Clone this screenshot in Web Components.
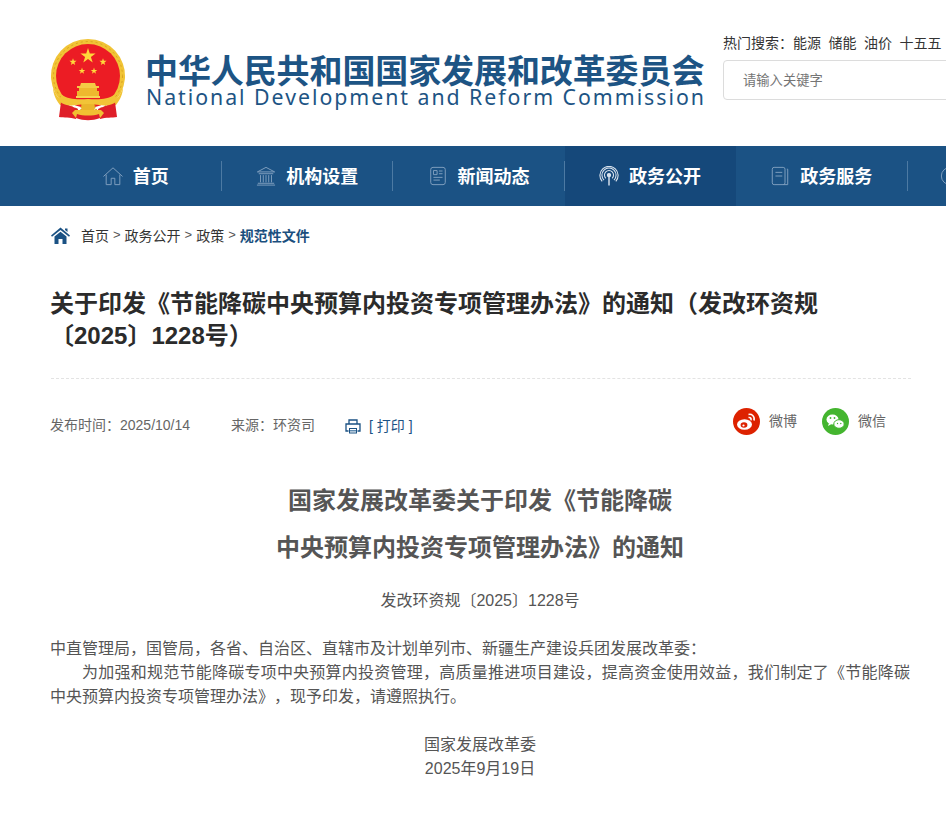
<!DOCTYPE html>
<html lang="zh"><head><meta charset="utf-8">
<style>
html,body{margin:0;padding:0;background:#fff;overflow:hidden;width:946px;height:814px;text-spacing-trim:space-all}
body{font-family:"Liberation Sans","Noto Sans CJK SC",sans-serif}
</style></head><body>
<site-header></site-header>
<main-nav>
<nav-item label="首页"><svg viewBox="0 0 22 22" fill="none" stroke="#7d9dbd" stroke-width="1.1"><path d="M.5 11.500 11 2l10.500 9.500M3.500 9.500V20.500h5.500v-7h4v7h5.500V9.500"/></svg></nav-item>
<nav-item label="机构设置"><svg viewBox="0 0 22 22" fill="none" stroke="#7d9dbd" stroke-width="1.1"><path d="M1.500 6.500 11 1.500l9.500 5zM3 8.500h16M5 10v8M8 10v8M11 10v8M14 10v8M17 10v8M2 19h18M1 21h20"/></svg></nav-item>
<nav-item label="新闻动态"><svg viewBox="0 0 22 22" fill="none" stroke="#7d9dbd" stroke-width="1.1"><rect x="3" y="1.500" width="16" height="19" rx="2.500"/><path d="M6 5h4v4.500H6zM12 5.500h4M12 8.500h4M6 12.500h10M6 15.500h7"/></svg></nav-item>
<nav-item label="政务公开" active><svg viewBox="0 0 22 22" fill="none" stroke="#d9e3ee" stroke-width="1.200"><circle cx="11" cy="10" r="1.800" fill="#d9e3ee"/><path d="M11 11v10.500" stroke-width="1.600"/><path d="M7.500 13.500a5 5 0 1 1 7 0M5.500 15.500a7.800 7.800 0 1 1 11 0M3.500 17a10 10 0 1 1 15 0"/></svg></nav-item>
<nav-item label="政务服务"><svg viewBox="0 0 22 22" fill="none" stroke="#7d9dbd" stroke-width="1.1"><rect x="2.500" y="1.500" width="14" height="19" rx="2"/><path d="M6 7h7.500M6 11h7.500M18.500 3.500h1v17h-5"/></svg></nav-item>
<nav-item label="" last><svg viewBox="0 0 22 22" fill="none" stroke="#7d9dbd" stroke-width="1.1"><circle cx="11" cy="11" r="9.500"/></svg></nav-item>
</main-nav>
<article-page>
<bread-crumb></bread-crumb>
<article-title>关于印发《节能降碳中央预算内投资专项管理办法》的通知（发改环资规〔2025〕1228号）</article-title>
<article-meta></article-meta>
<article-body></article-body>
</article-page>
<script>
function comp(name,css,html){
  customElements.define(name,class extends HTMLElement{
    constructor(){super();const s=this.attachShadow({mode:'open'});
      s.innerHTML='<style>'+css+'</style>'+(typeof html==='function'?html(this):html);}
  });
}
const star=(cx,cy,r,f='#ffd93b')=>{let p=[];for(let i=0;i<10;i++){const a=-Math.PI/2+i*Math.PI/5,q=i%2?r*.382:r;p.push((cx+q*Math.cos(a)).toFixed(1)+','+(cy+q*Math.sin(a)).toFixed(1));}return `<polygon points="${p.join(' ')}" fill="${f}"/>`};
const emblem=`<svg class="emblem" width="76" height="82" viewBox="0 0 76 82">
<path d="M15 66A37 37 0 1 1 61 66Z" fill="#f1c436"/>
<circle cx="38" cy="37" r="34.500" fill="none" stroke="#d9a320" stroke-width="1" stroke-dasharray="2 3"/>
<circle cx="38" cy="37" r="32" fill="#ec1c24"/>
${star(38,17,8)}${star(23,23,3.800)}${star(53,23,3.800)}${star(32,32,3.500)}${star(44,32,3.500)}
<path d="M31 44h14l1 3h3v2H27v-2h3z" fill="#f4cb45"/><path d="M29 49h18v3h2v5H27v-5h2z" fill="#eeb92e"/><path d="M26 57h24v2H26z" fill="#f7d552"/>
<path d="M3 48c2 7 5 11 9 14l4 5-6-1C6 61 3 55 3 48zM73 48c-2 7-5 11-9 14l-4 5 6-1C70 61 73 55 73 48z" fill="#f1c436"/>
<path d="M11 63 28 70 26 80C20 78 14 79 9 78Z" fill="#df1f29"/><path d="M65 63 48 70 50 80C56 78 62 79 67 78Z" fill="#df1f29"/>
<circle cx="38" cy="68" r="7" fill="#eab52b" stroke="#d9a320" stroke-dasharray="1.500 1.500"/>
<path d="M12 56C18 60 26 61 38 60 50 61 58 60 64 56L67 62C58 70 50 65 38 65 26 65 18 70 9 62Z" fill="#f2c437"/>
<path d="M25 71h26l3 3-4 5H26l-4-5z" fill="#f1c032"/><path d="M27 75c6 2 16 2 22 0l1 4c-8 3-16 3-24 0z" fill="#e0202a"/>
</svg>`;
comp('site-header',`:host{display:flex;height:146px;box-sizing:border-box;padding:39px 0 0 50px;width:1200px}
.emblem{flex:none}
.brand{margin-left:19px;width:559px;flex:none;padding-top:13px}
.cn{font:700 33px/34px "Noto Sans CJK SC",sans-serif;color:#1d5484;white-space:nowrap;letter-spacing:-.1px}
.en{font:400 21.300px/22px "Noto Sans","Open Sans",sans-serif;color:#1d5484;letter-spacing:1.970px;white-space:nowrap;margin:0 0 0 1px}
.side{margin-left:19px;margin-top:-8px}
.hot{font:14px/22px "Noto Sans CJK SC",sans-serif;color:#333;white-space:nowrap;display:flex}
.hot span{margin-right:7.500px}.hot span:first-child{margin-right:0}
.box{margin-top:7px;width:400px;height:40px;border:1px solid #dcdcdc;border-radius:4px;box-sizing:border-box;font:13.300px/38px "Noto Sans CJK SC",sans-serif;color:#757575;padding-left:19px}`,
`${emblem}<div class="brand"><div class="cn">中华人民共和国国家发展和改革委员会</div><div class="en">National Development and Reform Commission</div></div>
<div class="side"><div class="hot"><span>热门搜索：</span><span>能源</span><span>储能</span><span>油价</span><span>十五五</span></div><div class="box">请输入关键字</div></div>`);
comp('main-nav',`:host{display:flex;height:60px;background:#1b5284;padding-left:50.600px;width:1200px;box-sizing:border-box}`,`<slot></slot>`);
comp('nav-item',`:host{display:flex;flex:none;width:171.400px;height:60px;box-sizing:border-box;padding-right:1px;align-items:center;justify-content:center;gap:10px;position:relative;color:#fff;font:700 18px/60px "Noto Sans CJK SC",sans-serif}
:host([active]){background:#15487a}
:host::after{content:"";position:absolute;right:0;top:15px;height:30px;width:1px;background:#4d7aa3}
:host([active])::after,:host([last])::after{display:none}
:host([last]){justify-content:flex-start;padding-left:32px}
::slotted(svg){width:20px;height:20px;flex:none}
.t{white-space:nowrap;margin-top:-2px}`,el=>`<slot></slot>${el.getAttribute('label')?`<span class="t">${el.getAttribute('label')}</span>`:''}`);
comp('article-page',`:host{display:block;width:860px;margin-left:50px}`,`<slot></slot>`);
comp('bread-crumb',`:host{display:flex;align-items:center;height:60px;padding-left:1px;font:14px/20px "Noto Sans CJK SC",sans-serif;color:#333}
svg{width:19px;height:17px;margin-right:11px;margin-top:-1px}b{color:#1b4f7e;font-weight:700}
span,b{position:relative;top:-1px}
.s{font-family:"Liberation Sans";font-size:13px;color:#555;margin:0 4px}`,`<svg viewBox="0 0 19 17"><path fill="#1b5284" d="M9.500.5 19 8.500l-1 1.300L9.500 3 1 9.800 0 8.500zM3.500 9.500l6-4.800 6 4.800V17h-4v-5h-4v5h-4zM14 1.500h2.500v3.600L14 3z"/></svg><span>首页</span><span class="s">&gt;</span><span>政务公开</span><span class="s">&gt;</span><span>政策</span><span class="s">&gt;</span><b>规范性文件</b>`);
comp('article-title',`:host{display:block;padding:22px 0 26px;margin:0 -1px 0 1px;border-bottom:1px dashed #e3e3e3;font:700 24px/32px "Liberation Sans","Noto Sans CJK SC",sans-serif;color:#2b2b2b;height:64px}
div{margin:0 1px 0 -1px}`,`<div><slot></slot></div>`);
comp('article-meta',`:host{display:flex;align-items:flex-start;height:96px;padding-top:31px;box-sizing:border-box;font:14px/30px "Liberation Sans","Noto Sans CJK SC",sans-serif;color:#666}
.src{margin-left:41px}.pr{margin-left:30px;display:flex;align-items:center;gap:8px;color:#1b5284;margin-top:1px}
.pr svg{width:16px;height:15px}
.sh{margin-left:auto;margin-right:24px;display:flex;gap:25px;margin-top:-4px}
.i{display:flex;align-items:center;gap:9px}
.i svg{width:27px;height:27px}`,`<span>发布时间：2025/10/14</span><span class="src">来源：环资司</span>
<span class="pr"><svg viewBox="0 0 16 15"><path fill="none" stroke="#1b5284" stroke-width="1.300" d="M4 5V1h8v4M3.500 12H1V5h14v7h-2.500"/><path fill="#1b5284" d="M4 9h8v5.500H4z"/><path fill="#fff" d="M5 10h6v3.500H5z"/><path fill="#5f8bb0" d="M5 11h6v1.500H5z"/></svg>[ 打印 ]</span>
<span class="sh"><span class="i"><svg viewBox="0 0 27 27"><circle cx="13.500" cy="13.500" r="13.500" fill="#dd2200"/><ellipse cx="11.500" cy="16.500" rx="7.500" ry="5.200" fill="#fff"/><ellipse cx="11" cy="17" rx="3.400" ry="2.800" fill="#dd2200"/><circle cx="10.500" cy="17.500" r="1.100" fill="#fff"/><path fill="none" stroke="#fff" stroke-width="1.600" d="M15.500 6.500c3-.8 6.500 1.500 5.500 6M15.500 9.500c1.500-.3 3 .5 2.500 2.800"/></svg>微博</span>
<span class="i"><svg viewBox="0 0 27 27"><circle cx="13.500" cy="13.500" r="13.500" fill="#44b52f"/><ellipse cx="10.500" cy="11.500" rx="6" ry="5" fill="#fff"/><path d="M7 15l-1 3 3.500-2z" fill="#fff"/><ellipse cx="17" cy="16" rx="5.200" ry="4.300" fill="#fff" stroke="#44b52f"/><circle cx="8.500" cy="10" r=".9" fill="#44b52f"/><circle cx="12.500" cy="10" r=".9" fill="#44b52f"/><circle cx="15.500" cy="15.500" r=".7" fill="#44b52f"/><circle cx="18.800" cy="15.500" r=".7" fill="#44b52f"/></svg>微信</span></span>`);
comp('article-body',`:host{display:block;font:16px/24px "Liberation Sans","Noto Sans CJK SC",sans-serif;color:#555}
h1{margin:0;font:700 24px/47px "Noto Sans CJK SC",sans-serif;color:#555;text-align:center}
.no{text-align:center;margin-top:20px;margin-bottom:24px;height:24px}
p{margin:0;text-align:justify}.ind{text-indent:32px}
.sig{text-align:center;margin-top:24px}`,`<h1>国家发展改革委关于印发《节能降碳<br>中央预算内投资专项管理办法》的通知</h1>
<div class="no">发改环资规〔2025〕1228号</div>
<p>中直管理局，国管局，各省、自治区、直辖市及计划单列市、新疆生产建设兵团发展改革委：</p>
<p class="ind">为加强和规范节能降碳专项中央预算内投资管理，高质量推进项目建设，提高资金使用效益，我们制定了《节能降碳中央预算内投资专项管理办法》，现予印发，请遵照执行。</p>
<div class="sig">国家发展改革委<br>2025年9月19日</div>`);
</script>
</body></html>
